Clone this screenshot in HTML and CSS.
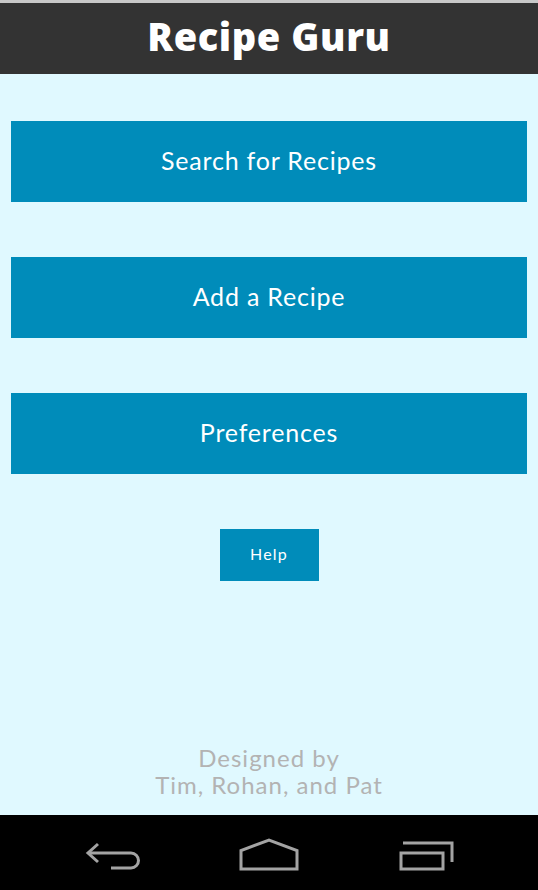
FILE: index.html
```html
<!DOCTYPE html>
<html>
<head>
<meta charset="utf-8">
<link rel="stylesheet" href="styles.css">
</head>
<body>
<div class="screen">
  <div class="status"></div>
  <header class="topbar"><h1 class="title">Recipe Guru</h1></header>
  <main class="content">
    <div class="menu">
      <a class="btn big">Search for Recipes</a>
      <a class="btn big">Add a Recipe</a>
      <a class="btn big">Preferences</a>
      <a class="btn small">Help</a>
    </div>
    <footer class="credits">Designed by<br>Tim, Rohan, and Pat</footer>
  </main>
  <nav class="navbar">
    <svg class="nav-icon" width="538" height="75" viewBox="0 0 538 75">
      <g fill="none" stroke="#a3a3a3" stroke-width="3">
        <path d="M98 29 L88 38 L98 47"/>
        <path d="M88 38 H131 A7.5 7.5 0 0 1 131 53 H111"/>
        <path d="M241 54 V35.5 L269 25 L297 35.5 V54 Z"/>
        <rect x="401" y="38" width="42" height="16"/>
        <path d="M403 28 H452 V47"/>
      </g>
    </svg>
  </nav>
</div>
</body>
</html>
```
FILE: styles.css
```css
html, body {
  margin: 0;
  padding: 0;
}
.screen {
  width: 538px;
  height: 890px;
  display: flex;
  flex-direction: column;
  background: #e0f9ff;
  overflow: hidden;
}
.status {
  height: 3px;
  background: #c8c8c8;
}
.topbar {
  height: 71px;
  background: #333333;
  display: flex;
  align-items: center;
  justify-content: center;
}
.title {
  margin: 0;
  color: #ffffff;
  font-family: "Open Sans", sans-serif;
  font-weight: 800;
  font-size: 38px;
  letter-spacing: 0.6px;
  line-height: 1;
  padding-bottom: 5px;
}
.content {
  flex: 1;
  display: flex;
  flex-direction: column;
}
.menu {
  display: flex;
  flex-direction: column;
  align-items: center;
  gap: 55px;
  padding: 47px 11px 0;
}
.btn {
  background: #008cba;
  color: #ffffff;
  font-family: Lato, sans-serif;
  font-weight: 400;
  display: flex;
  align-items: center;
  justify-content: center;
  box-sizing: border-box;
}
.big {
  width: 516px;
  height: 81px;
  font-size: 25px;
  letter-spacing: 0.8px;
  padding-bottom: 3px;
}
.small {
  width: 99px;
  height: 52px;
  font-size: 16px;
  letter-spacing: 1.2px;
  padding-bottom: 3px;
}
.credits {
  margin-top: auto;
  text-align: center;
  color: #b3b3b3;
  font-family: Lato, sans-serif;
  font-weight: 400;
  font-size: 24px;
  letter-spacing: 1px;
  line-height: 27px;
  padding-bottom: 17px;
}
.navbar {
  height: 75px;
  background: #000000;
}
.nav-icon {
  display: block;
}
```
